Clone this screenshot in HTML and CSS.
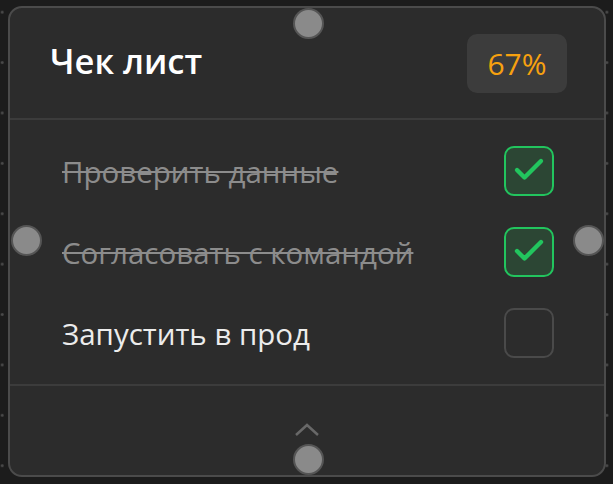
FILE: index.html
```html
<!DOCTYPE html>
<html lang="ru">
<head>
<meta charset="UTF-8">
<meta name="viewport" content="width=device-width, initial-scale=1.0">
<title>Чек лист</title>
<link rel="stylesheet" href="styles.css">
</head>
<body>
<div class="canvas">
  <div class="node">
    <div class="node-head">
      <h2 class="node-title">Чек лист</h2>
      <span class="progress">67%</span>
    </div>
    <ul class="check-list">
      <li class="check-item done">
        <span class="check-label">Проверить данные</span>
        <span class="check-box">
          <svg viewBox="0 0 24 24"><polyline points="20 6 9 17 4 12"/></svg>
        </span>
      </li>
      <li class="check-item done">
        <span class="check-label">Согласовать с командой</span>
        <span class="check-box">
          <svg viewBox="0 0 24 24"><polyline points="20 6 9 17 4 12"/></svg>
        </span>
      </li>
      <li class="check-item">
        <span class="check-label">Запустить в прод</span>
        <span class="check-box"></span>
      </li>
    </ul>
    <div class="node-foot">
      <svg class="collapse" viewBox="0 0 26 14"><polyline points="2 12 13 2 24 12"/></svg>
    </div>
    <!-- connection handles -->
    <span class="handle handle-top"></span>
    <span class="handle handle-left"></span>
    <span class="handle handle-right"></span>
    <span class="handle handle-bottom"></span>
  </div>
</div>
</body>
</html>
```
FILE: styles.css
```css
body {
  margin: 0;
  padding: 0;
  font-family: "Open Sans", "Noto Sans", sans-serif;
  background-color: #1c1c1c;
  color: #eee;
}
.canvas {
  width: 613px;
  height: 484px;
  box-sizing: border-box;
  padding: 6px 7px 7px 8px;
  background-image: radial-gradient(circle, #4a4a4a 1.2px, transparent 1.6px);
  background-size: 50.4px 50.4px;
  background-position: -23px -13px;
}
.node {
  position: relative;
  height: 100%;
  box-sizing: border-box;
  background-color: #2c2c2c;
  border: 2px solid #4b4b4b;
  border-radius: 14px;
  display: flex;
  flex-direction: column;
}
.node-head {
  height: 110px;
  display: flex;
  align-items: center;
  justify-content: space-between;
  padding: 0 37px 0 40px;
  border-bottom: 2px solid #3c3c3c;
}
.node-title {
  margin: -5px 0 0;
  font-size: 34.5px;
  font-weight: 600;
  color: #fff;
}
.progress {
  width: 100px;
  height: 59px;
  display: flex;
  align-items: center;
  justify-content: center;
  background-color: #3c3c3c;
  border-radius: 10px;
  color: #f7a10f;
  font-size: 30px;
}
.check-list {
  list-style: none;
  margin: 0;
  padding: 26px 50px 26px 52px;
  display: flex;
  flex-direction: column;
  gap: 31px;
  border-bottom: 2px solid #3c3c3c;
}
.check-item {
  height: 50px;
  display: flex;
  align-items: center;
  justify-content: space-between;
}
.check-label {
  font-size: 29.5px;
  color: #ececec;
}
.done .check-label {
  color: #8c8c8c;
  text-decoration: line-through;
  text-decoration-thickness: 1.5px;
}
.check-box {
  width: 50px;
  height: 50px;
  box-sizing: border-box;
  border: 2px solid #4a4a4a;
  border-radius: 10px;
  display: flex;
  align-items: center;
  justify-content: center;
}
.done .check-box {
  border-color: #22c55e;
  background-color: #2c4634;
}
.check-box svg {
  width: 36px;
  height: 36px;
  margin-top: -3px;
  fill: none;
  stroke: #22c55e;
  stroke-width: 2.9;
  stroke-linecap: round;
  stroke-linejoin: round;
}
.node-foot {
  flex: 1;
  display: flex;
  justify-content: center;
  padding-top: 37px;
}
.collapse {
  width: 26px;
  height: 14px;
  fill: none;
  stroke: #686868;
  stroke-width: 2.5;
}
.handle {
  position: absolute;
  width: 31px;
  height: 31px;
  box-sizing: border-box;
  border-radius: 50%;
  background-color: #8a8a8a;
  border: 2px solid #555;
}
.handle-top {
  top: 0;
  left: 283px;
}
.handle-bottom {
  bottom: 0;
  left: 283px;
}
.handle-left {
  top: 217px;
  left: 1px;
}
.handle-right {
  top: 217px;
  right: 0;
}
```
